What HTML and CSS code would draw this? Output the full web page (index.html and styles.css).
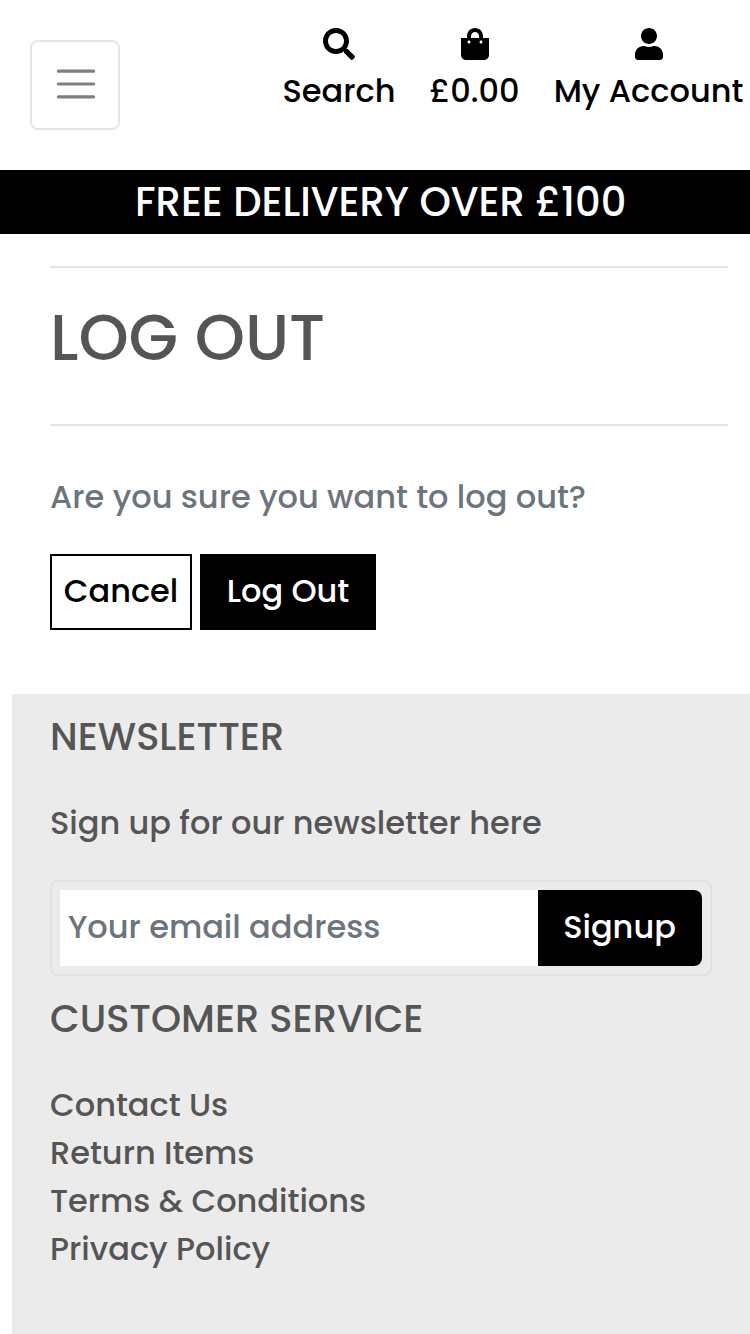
FILE: index.html
```html
<!DOCTYPE html>
<html lang="en">
<head>
<meta charset="utf-8">
<title>Log Out</title>
<link rel="stylesheet" href="styles.css">
</head>
<body>
<header class="header">
  <button class="toggler" aria-label="Toggle navigation">
    <svg class="toggler-icon" viewBox="0 0 30 30"><path d="M4 7h22M4 15h22M4 23h22"/></svg>
  </button>
  <nav class="tools">
    <a class="tool tool-search"><svg class="icon" viewBox="0 0 512 512"><path d="M505 442.700L405.300 343c-4.500-4.500-10.600-7-17-7H372c27.600-35.300 44-79.700 44-128C416 93.100 322.900 0 208 0S0 93.100 0 208s93.100 208 208 208c48.300 0 92.700-16.400 128-44v16.300c0 6.400 2.500 12.500 7 17l99.700 99.700c9.400 9.400 24.600 9.400 33.900 0l28.300-28.300c9.400-9.400 9.400-24.600.1-34zM208 336c-70.700 0-128-57.200-128-128 0-70.700 57.200-128 128-128 70.700 0 128 57.200 128 128 0 70.700-57.200 128-128 128z"/></svg><span>Search</span></a>
    <a class="tool tool-bag"><svg class="icon icon-narrow" viewBox="0 0 448 512"><path d="M352 160v-32C352 57.420 294.579 0 224 0 153.420 0 96 57.420 96 128v32H0v272c0 44.183 35.817 80 80 80h288c44.183 0 80-35.817 80-80V160h-96zm-192-32c0-35.290 28.710-64 64-64s64 28.710 64 64v32H160v-32zm160 120c-13.255 0-24-10.745-24-24s10.745-24 24-24 24 10.745 24 24-10.745 24-24 24zm-192 0c-13.255 0-24-10.745-24-24s10.745-24 24-24 24 10.745 24 24-10.745 24-24 24z"/></svg><span>£0.00</span></a>
    <a class="tool tool-account"><svg class="icon icon-narrow" viewBox="0 0 448 512"><path d="M224 256c70.700 0 128-57.300 128-128S294.700 0 224 0 96 57.300 96 128s57.300 128 128 128zm89.600 32h-16.700c-22.200 10.200-46.900 16-72.900 16s-50.600-5.800-72.900-16h-16.700C60.200 288 0 348.200 0 422.400V464c0 26.500 21.500 48 48 48h352c26.500 0 48-21.500 48-48v-41.600c0-74.200-60.200-134.400-134.400-134.400z"/></svg><span>My Account</span></a>
  </nav>
</header>
<div class="banner">FREE DELIVERY OVER £100</div>
<main class="content">
  <hr class="rule">
  <h1 class="title">LOG OUT</h1>
  <hr class="rule">
  <p class="question">Are you sure you want to log out?</p>
  <div class="actions">
    <a class="btn btn-outline">Cancel</a>
    <button class="btn btn-dark">Log Out</button>
  </div>
</main>
<footer class="footer">
  <h2 class="heading">NEWSLETTER</h2>
  <p class="lead">Sign up for our newsletter here</p>
  <form class="signup">
    <input class="email" type="email" placeholder="Your email address">
    <button class="signup-btn" type="button">Signup</button>
  </form>
  <h2 class="heading">CUSTOMER SERVICE</h2>
  <ul class="links">
    <li><a>Contact Us</a></li>
    <li><a>Return Items</a></li>
    <li><a>Terms &amp; Conditions</a></li>
    <li><a>Privacy Policy</a></li>
  </ul>
</footer>
</body>
</html>
```

FILE: styles.css
```css
* { box-sizing: border-box; }
body {
  margin: 0;
  height: 1334px;
  display: flex;
  flex-direction: column;
  overflow: hidden;
  background: #fff;
  color: #555;
  font: 500 32px/48px Poppins, Inter, sans-serif;
  white-space: nowrap;
}
h1, h2, p, ul { margin: 0; padding: 0; font-weight: inherit; }
ul { list-style: none; }
button, input { font: inherit; padding: 0; margin: 0; border: 0; border-radius: 0; }

.header { height: 170px; flex: none; display: flex; justify-content: space-between; padding: 28px 6.500px 0 30px; }
.toggler { width: 90px; height: 90px; margin-top: 12px; border: 2px solid rgba(0,0,0,.1); border-radius: 8px; background: none; display: flex; padding: 18px 0 0 20px; }
.toggler-icon { width: 48px; height: 48px; fill: none; stroke: rgba(0,0,0,.5); stroke-width: 2; stroke-linecap: round; }
.tools { display: flex; gap: 34px; color: #000; }
.tool { display: flex; flex-direction: column; align-items: center; gap: 7px; }
.tool-search { width: 113px; }
.tool-bag { width: 90px; }
.tool-account { width: 190px; }
.icon { width: 32px; height: 32px; fill: #000; flex: none; }
.icon-narrow { width: 28px; }

.banner { height: 64px; flex: none; background: #000; color: #fff; font-size: 40px; line-height: 64px; padding-left: 135px; }

.content { height: 460px; flex: none; padding: 32px 22px 0 50px; }
.rule { margin: 0; border: 0; height: 2px; background: #e5e5e5; }
.title { font-size: 64px; line-height: 76px; padding: 32px 0 48px; }
.question { color: #6c757d; margin-top: 47px; }
.actions { display: flex; gap: 8px; margin-top: 33px; }
.btn { height: 76px; line-height: 70px; display: flex; justify-content: center; align-items: flex-start; border: 2px solid #000; }
.btn-outline { width: 142px; color: #000; }
.btn-dark { width: 176px; background: #000; color: #fff; }

.footer { flex: 1; margin-left: 12px; padding: 20px 38px 0; background: #ebebeb; }
.heading { font-size: 38.4px; line-height: 46px; }
.lead { margin-top: 39px; }
.signup { display: flex; width: 662px; height: 96px; margin: 33px 0 20px; padding: 8px; border: 2px solid #dee2e6; border-radius: 8px; }
.email { flex: 1; min-width: 0; height: 76px; background: #fff; padding: 0 8px 3px; }
.email::placeholder { color: #6c757d; opacity: 1; }
.signup-btn { display: flex; justify-content: center; align-items: flex-start; width: 164px; padding-right: 1px; background: #000; color: #fff; border-radius: 0 8px 8px 0; line-height: 74px; }
.links { margin-top: 39px; }
```
